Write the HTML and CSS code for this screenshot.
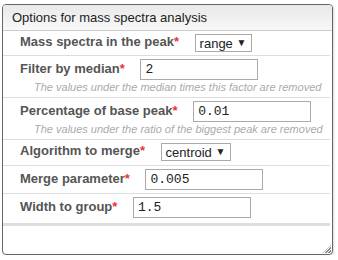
FILE: index.html
```
<!DOCTYPE html>
<html lang="en">
<head>
    <meta charset="UTF-8">
    <title>Options for mass spectra analysis</title>
    <link rel="stylesheet" href="styles.css">
</head>
<body>

    <div class="panel">
        <div class="panel-title">Options for mass spectra analysis</div>
        <div class="panel-body">
            <div class="row row-select">
                <label>Mass spectra in the peak<span class="req">*</span></label>
                <span class="select">range <span class="arrow">&#9660;</span></span>
            </div>
            <div class="row row-hint">
                <label>Filter by median<span class="req">*</span></label>
                <input type="text" value="2">
                <div class="hint">The values under the median times this factor are removed</div>
            </div>
            <div class="row row-hint">
                <label>Percentage of base peak<span class="req">*</span></label>
                <input type="text" value="0.01">
                <div class="hint">The values under the ratio of the biggest peak are removed</div>
            </div>
            <div class="row row-select row-algo">
                <label>Algorithm to merge<span class="req">*</span></label>
                <span class="select">centroid <span class="arrow">&#9660;</span></span>
            </div>
            <div class="row">
                <label>Merge parameter<span class="req">*</span></label>
                <input type="text" value="0.005">
            </div>
            <div class="row row-last">
                <label>Width to group<span class="req">*</span></label>
                <input type="text" value="1.5">
            </div>
        </div>
        <div class="grip"></div>
    </div>

</body>
</html>
```

FILE: styles.css
```
body {
    font-family: "Liberation Sans", Arial, sans-serif;
    background-color: #fff;
    margin: 0;
    padding: 4px 0 0 2px;
}
.panel {
    position: relative;
    width: 331px;
    height: 251px;
    border: 1px solid #666;
    border-radius: 4px;
    box-sizing: border-box;
    box-shadow: 1px 1px 2px rgba(0, 0, 0, 0.15);
    overflow: hidden;
}
.panel-title {
    height: 25px;
    line-height: 25px;
    padding-left: 9px;
    font-size: 13px;
    color: #222;
    background: linear-gradient(#e9e9e9, #f8f8f8);
    border-bottom: 1px solid #ccc;
}
.panel-body {
    padding: 0 2px 0 0;
}
.row {
    padding: 3px 0 3px 17px;
    border-bottom: 1px solid #ddd;
    font-size: 13px;
}
.row-select {
    padding: 3px 0 3px 17px;
}
.row-hint {
    padding-top: 3px;
    padding-bottom: 4px;
}
.row-algo {
    padding-bottom: 4px;
}
.row-last {
    padding-bottom: 5px;
    border-bottom: 3px solid #ddd;
}
label {
    font-weight: bold;
    color: #555;
    margin-right: 12px;
}
.req {
    color: #e33;
}
input {
    width: 118px;
    height: 21px;
    box-sizing: border-box;
    border: 1px solid #aaa;
    padding: 0 4px;
    font-family: "Liberation Mono", monospace;
    font-size: 13px;
    color: #222;
    vertical-align: middle;
}
.select {
    display: inline-block;
    height: 18px;
    line-height: 16px;
    box-sizing: border-box;
    border: 1px solid #aaa;
    padding: 0 5px 0 4px;
    color: #222;
    vertical-align: middle;
}
.arrow {
    font-size: 10px;
    vertical-align: 2px;
}
.hint {
    margin-top: 1px;
    padding-left: 14px;
    font-size: 11px;
    font-style: italic;
    color: #aaa;
}
.grip {
    position: absolute;
    right: 1px;
    bottom: 1px;
    width: 8px;
    height: 8px;
    background: repeating-linear-gradient(135deg, transparent 0, transparent 1px, #888 1px, #888 2px);
    clip-path: polygon(100% 0, 100% 100%, 0 100%);
}
```
